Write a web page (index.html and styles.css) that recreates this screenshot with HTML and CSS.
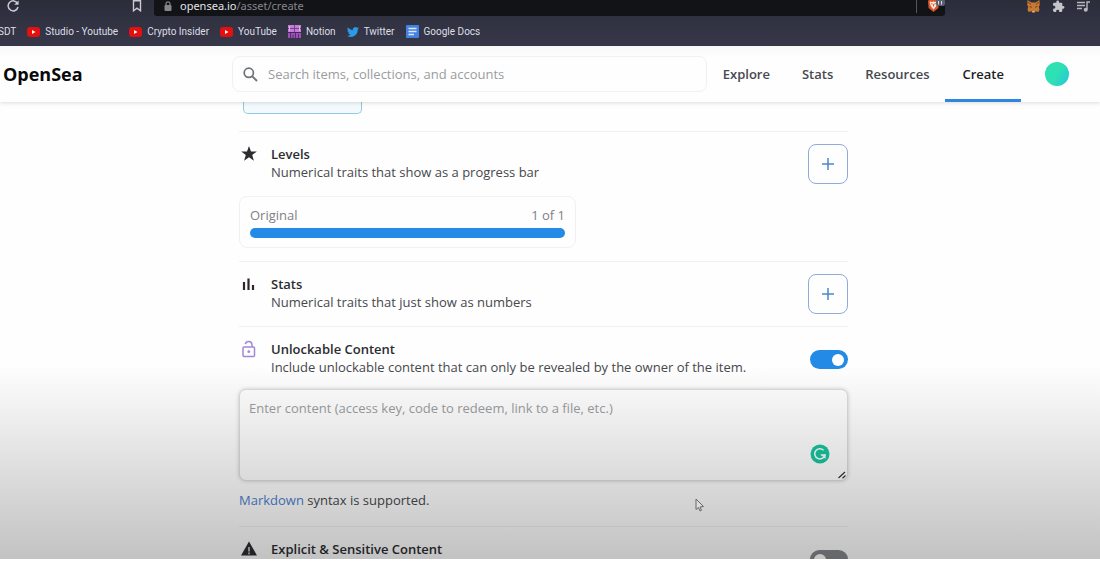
FILE: index.html
```html
<!DOCTYPE html>
<html lang="en">
<head>
<meta charset="utf-8">
<title>Create item | OpenSea</title>
<link rel="stylesheet" href="styles.css">
</head>
<body>
<div class="screen">
  <div class="browser">
    <div class="toolbar">
      <button class="tool reload" aria-label="Reload"><svg width="14" height="14" viewBox="0 0 14 14"><path d="M11.6 4.6A5 5 0 1 0 12 8" fill="none" stroke="#c9cad2" stroke-width="1.5"/><path d="M12.6 1.4v4.4H8.2z" fill="#c9cad2"/></svg></button>
      <button class="tool" aria-label="Bookmark this page"><svg width="10" height="12" viewBox="0 0 10 12"><path d="M1.5.8h7v10L5 8.2l-3.5 2.6z" fill="none" stroke="#c9cad2" stroke-width="1.4"/></svg></button>
      <div class="address">
        <svg width="8" height="10" viewBox="0 0 8 10"><path d="M2 5V2.8a2 2 0 0 1 4 0V5" fill="none" stroke="#85868c" stroke-width="1.2"/><rect x=".5" y="4" width="7" height="6" rx="1" fill="#85868c"/></svg>
        <span class="url"><b>opensea.io</b>/asset/create</span>
        <span class="shield"><svg width="18" height="14" viewBox="0 0 18 14"><path d="M2.5 0h8l1.5 2-.6 7L6.500 13 1.600 9 1 2z" fill="#dc5427"/><path d="M3 2.500l2 .6 1.500-.6 1.500.6 2-.6.3 1.500-1.300 3.500-2.500 3-2.500-3L2.700 4z" fill="#f5e9e4"/><path d="M4 4.500l1.800.7M9 4.500l-1.800.7M6.500 5v2.500" stroke="#dc5427" stroke-width=".9"/><rect x="9" y="0" width="9" height="7" rx="2" fill="#5b6070"/><path d="M11.500 2v3.500M14.500 2v3.500" stroke="#ddd"/></svg></span>
      </div>
      <button class="tool" aria-label="MetaMask"><svg width="13" height="13" viewBox="0 0 13 13"><path d="M.5 0l4 2.500h4l4-2.500.2 5-.9 2 .7 2.500-1 2.500-3-.8-1 1h-2l-1-1-3 .8-1-2.500.7-2.500L.300 5z" fill="#c9792f"/><path d="M2.500 6.500l2.500.8M10.500 6.500l-2.500.8M1 2l3 2.500M12 2L9 4.500" stroke="#7a431c"/><path d="M5 11h3l-.5 1.500h-2z" fill="#c9b7a7"/></svg></button>
      <button class="tool" aria-label="Extensions"><svg width="13" height="13" viewBox="0 0 24 24"><path d="M20.500 11H19V7a2 2 0 0 0-2-2h-4V3.500a2.500 2.500 0 0 0-5 0V5H4a2 2 0 0 0-2 2v3.800h1.500a2.700 2.700 0 0 1 0 5.400H2V20a2 2 0 0 0 2 2h3.800v-1.500a2.700 2.700 0 0 1 5.400 0V22H17a2 2 0 0 0 2-2v-4h1.500a2.500 2.500 0 0 0 0-5z" fill="#c4c5cb"/></svg></button>
      <button class="tool" aria-label="Media controls"><svg width="13" height="13" viewBox="0 0 13 13"><path d="M0 2.500h8M0 5.500h8M0 8.500h5" stroke="#b5b6be" stroke-width="1.400"/><path d="M10 9.500V2h3" fill="none" stroke="#b5b6be" stroke-width="1.400"/><circle cx="8.700" cy="9.700" r="2" fill="#b5b6be"/></svg></button>
    </div>
    <nav class="bookmarks" aria-label="Bookmarks">
      <a href="#">SDT</a>
      <a href="#"><svg width="13" height="10" viewBox="0 0 13 10"><rect width="13" height="10" rx="3" fill="#e60f0f"/><path d="M5 3l3.500 2L5 7z" fill="#fff"/></svg>Studio - Youtube</a>
      <a href="#"><svg width="13" height="10" viewBox="0 0 13 10"><rect width="13" height="10" rx="3" fill="#e60f0f"/><path d="M5 3l3.500 2L5 7z" fill="#fff"/></svg>Crypto Insider</a>
      <a href="#"><svg width="13" height="10" viewBox="0 0 13 10"><rect width="13" height="10" rx="3" fill="#e60f0f"/><path d="M5 3l3.500 2L5 7z" fill="#fff"/></svg>YouTube</a>
      <a href="#"><svg width="13" height="13" viewBox="0 0 13 13"><rect width="13" height="13" fill="#9c52b5"/><path d="M0 0h13v7H0z" fill="#c07fd0"/><path d="M0 3.500h13M6.500 0v7" stroke="#7d3c98"/><path d="M1.500 1v5M11.500 1v5" stroke="#dcb0e6"/><path d="M0 7.500h13" stroke="#4b2260"/><path d="M2.500 8v5M5 9.500v3.500M7.500 8v5M10.500 9v4" stroke="#5d2a75"/></svg>Notion</a>
      <a href="#"><svg width="12" height="12" viewBox="0 0 24 24"><path d="M24 4.600a10 10 0 0 1-2.800.8 5 5 0 0 0 2.100-2.700 10 10 0 0 1-3.100 1.200 4.900 4.900 0 0 0-8.400 4.500A14 14 0 0 1 1.700 3.200a4.900 4.900 0 0 0 1.500 6.500 5 5 0 0 1-2.200-.6 4.900 4.900 0 0 0 3.900 4.900 5 5 0 0 1-2.200.1 4.900 4.900 0 0 0 4.600 3.400A10 10 0 0 1 0 19.500a14 14 0 0 0 21.500-12.400A10 10 0 0 0 24 4.600z" fill="#2b9be6"/></svg>Twitter</a>
      <a href="#"><svg width="13" height="13" viewBox="0 0 13 13"><rect width="13" height="13" rx="1" fill="#4582df"/><path d="M2.500 3.500h8M2.500 6.500h8M2.500 9.500h5.500" stroke="#dbe8fb" stroke-width="1.500"/></svg>Google Docs</a>
    </nav>
  </div>

  <header class="site-header">
    <a class="brand" href="#">OpenSea</a>
    <label class="search">
      <svg width="15" height="15" viewBox="0 0 15 15"><circle cx="5.800" cy="5.800" r="4.600" fill="none" stroke="#6c7378" stroke-width="1.700"/><path d="M9.300 9.300l4.700 4.700" stroke="#6c7378" stroke-width="1.900"/></svg>
      <input type="search" placeholder="Search items, collections, and accounts" aria-label="Search items, collections, and accounts">
    </label>
    <nav class="site-nav">
      <a href="#">Explore</a>
      <a href="#">Stats</a>
      <a href="#">Resources</a>
      <a href="#" class="current" aria-current="page">Create</a>
    </nav>
    <button class="avatar" aria-label="Account"></button>
  </header>

  <main class="page">
    <form class="form">
      <div class="property"></div>

      <section class="section">
        <div class="row">
          <svg class="icon" width="20" height="18" viewBox="0 0 20 18"><path d="M10 1l2 5.500h5.800l-4.600 3.500 1.700 5.800-4.900-3.500-4.900 3.500L6.800 10 2.200 6.500H8z" fill="#2c2d31"/></svg>
          <div class="label"><h2>Levels</h2><p>Numerical traits that show as a progress bar</p></div>
          <button type="button" class="add" aria-label="Add level"><svg width="12" height="12" viewBox="0 0 12 12"><path d="M6 0v12M0 6h12" stroke="#4a87cf" stroke-width="1.500"/></svg></button>
        </div>
        <div class="level">
          <div class="level-text"><span>Original</span><span>1 of 1</span></div>
          <div class="bar"></div>
        </div>
      </section>

      <section class="section">
        <div class="row">
          <svg class="icon" width="20" height="18" viewBox="0 0 20 18"><path d="M5 7v8M9.500 3.500V15M14 10v5" stroke="#2f2628" stroke-width="2.200"/></svg>
          <div class="label"><h2>Stats</h2><p>Numerical traits that just show as numbers</p></div>
          <button type="button" class="add" aria-label="Add stat"><svg width="12" height="12" viewBox="0 0 12 12"><path d="M6 0v12M0 6h12" stroke="#4a87cf" stroke-width="1.500"/></svg></button>
        </div>
      </section>

      <section class="section">
        <div class="row">
          <svg class="icon" width="20" height="18" viewBox="0 0 20 18"><rect x="4" y="7" width="11.500" height="9.500" rx="1" fill="none" stroke="#a288dc" stroke-width="1.500"/><path d="M6.300 4.200a3.400 3.400 0 0 1 6.700.3V7" fill="none" stroke="#a288dc" stroke-width="1.500"/><circle cx="9.800" cy="11.700" r="1.400" fill="#a288dc"/></svg>
          <div class="label"><h2>Unlockable Content</h2><p>Include unlockable content that can only be revealed by the owner of the item.</p></div>
          <input class="switch" type="checkbox" role="switch" checked aria-label="Unlockable Content">
        </div>
        <div class="editor">
          <textarea placeholder="Enter content (access key, code to redeem, link to a file, etc.)" aria-label="Unlockable content"></textarea>
          <svg class="grammar" width="20" height="20" viewBox="0 0 20 20"><circle cx="10" cy="10" r="9.500" fill="#19c4a0"/><path d="M13.600 6.300A5.100 5.100 0 1 0 14.800 11h-4" fill="none" stroke="#f4fffc" stroke-width="1.500"/><path d="M15.600 10v5l-3.600-3.500z" fill="#f4fffc"/></svg>
          <svg class="grip" width="8" height="8" viewBox="0 0 8 8"><path d="M.5 7L7 1M4.500 7.200L7.500 4.500" stroke="#333" stroke-width="1.200"/></svg>
        </div>
        <p class="hint"><a href="#">Markdown</a> syntax is supported.</p>
      </section>

      <section class="section">
        <div class="row">
          <svg class="icon" width="20" height="18" viewBox="0 0 20 18"><path d="M10 1.500l8 14H2z" fill="#2c2d31"/><path d="M10 7v4.500M10 12.500v1.700" stroke="#ddd" stroke-width="1.500"/></svg>
          <div class="label"><h2>Explicit &amp; Sensitive Content</h2></div>
          <input class="switch" type="checkbox" role="switch" aria-label="Explicit and Sensitive Content">
        </div>
      </section>
    </form>
  </main>
  <div class="shade"></div>
  <svg class="pointer" width="10" height="14" viewBox="0 0 10 14"><path d="M1 1v10.500l2.500-2 1.500 3.500 1.500-.7L5 9l3.500-.5z" fill="#dcdcdc" stroke="#666" stroke-width="1"/></svg>
</div>
</body>
</html>
```
FILE: styles.css
```css
* { box-sizing: border-box; }
body { margin: 0; background: #fff; color: #46484d; font: 13px/18px "Open Sans", Inter, sans-serif; }
a { color: inherit; text-decoration: none; }
button { border: 0; padding: 0; background: none; }
h2, p { margin: 0; font-size: 13px; line-height: 18px; }
svg { flex: none; }

.screen { position: relative; display: flex; flex-direction: column; height: calc(100vh - 3px); overflow: hidden; background: #fefefe; }

.browser { flex: none; background: linear-gradient(#2c2d3b, #363749); color: #dedfe5; font: 10px/14px Roboto, "Noto Sans", sans-serif; }
.toolbar { display: flex; gap: 12px; height: 16px; padding: 0 10px 0 6px; }
.tool { display: flex; align-items: center; height: 12px; }
.reload { margin-right: auto; }
.address { display: flex; align-items: center; flex: 0 1 791px; gap: 8px; height: 16px; margin-right: 70px; padding: 0 0 4px 10px; border-radius: 0 0 3px 3px; background: #121317; }
.url { color: #85868d; font: 11px/12px "Noto Sans", sans-serif; }
.url b { color: #e4e4e6; font-weight: 400; }
.shield { display: flex; margin-left: auto; padding-left: 10px; border-left: 1px solid #55565c; }
.bookmarks { display: flex; align-items: center; gap: 11px; height: 30px; padding-top: 1px; margin-left: -2px; }
.bookmarks a { display: flex; align-items: center; gap: 5px; white-space: nowrap; }

.site-header { position: relative; z-index: 1; flex: none; display: flex; align-items: center; height: 56px; padding: 0 31px 0 3px; background: linear-gradient(#f8f8f8, #fefefe 12px); box-shadow: 0 1px 4px #00000024; }
.brand { flex: 0 0 229px; color: #08090b; font-size: 18px; font-weight: 700; }
.search { display: flex; align-items: center; flex: 1; gap: 10px; height: 36px; padding: 0 11px 0 10px; border: 1px solid #f1f1f3; border-radius: 8px; }
.search input { flex: 1; min-width: 0; border: 0; padding: 0; background: none; font: inherit; }
.search input::placeholder { color: #9a9c9f; }
.site-nav { display: flex; align-self: stretch; font-weight: 600; color: #464950; }
.site-nav a { display: flex; align-items: center; padding: 0 16px; border-bottom: 3px solid transparent; border-top: 3px solid transparent; }
.site-nav .current { padding: 0 17px; border-bottom-color: #2e86de; color: #1d1f24; }
.avatar { width: 24px; height: 24px; margin-left: 24px; border-radius: 50%; background: linear-gradient(120deg, #2ee0b4 50%, #28c4da); }

.page { flex: 1; min-height: 0; padding: 0 13px 0 0; overflow: hidden; }
.form { max-width: 609px; margin: 0 auto; }
.property { width: 119px; height: 12px; margin: 0 4px 17px; border: 1px solid #8fcadc; border-top: 0; border-radius: 0 0 5px 5px; background: #f3fafd; }
.section { padding: 12px 0; border-top: 1px solid #f0f0f2; }
.row { display: flex; align-items: center; gap: 12px; min-height: 40px; }
.icon { align-self: flex-start; margin-top: 1px; }
.label { flex: 1; align-self: flex-start; padding-top: 1px; }
.label h2 { font-weight: 600; color: #2b2c31; }
.add { display: grid; place-items: center; width: 40px; height: 40px; border: 1px solid #8eabdc; border-radius: 8px; }
.level { max-width: 337px; margin: 12px 0 1px; padding: 9px 10px; border: 1px solid #f1f1f3; border-radius: 8px; }
.level-text { display: flex; justify-content: space-between; color: #7e8186; margin-bottom: 4px; }
.bar { height: 10px; border-radius: 5px; background: #238be6; }
.switch { appearance: none; display: flex; width: 38px; height: 19px; margin: 0; padding: 4px 4px; border-radius: 10px; background: #86878b; }
.switch::before { content: ""; width: 12px; height: 12px; border-radius: 50%; background: #fff; }
.switch:checked { justify-content: flex-end; background: #238be6; }
.editor { position: relative; display: flex; margin-top: 10px; }
.editor textarea { flex: 1; height: 92px; padding: 9px; border: 1px solid #dcdcde; border-radius: 7px; background: #fefefe; box-shadow: 0 0 4px #0003; font: inherit; resize: none; }
.editor textarea::placeholder { color: #9b9da0; }
.grammar { position: absolute; right: 18px; bottom: 17px; }
.grip { position: absolute; right: 2px; bottom: 2px; }
.hint { margin: 10px 0 5px; }
.hint a { color: #4c7fd0; }
.shade { position: absolute; z-index: 2; inset: 365px 0 0; background: linear-gradient(#0000, #0000003c); pointer-events: none; }
.pointer { position: absolute; z-index: 3; left: 695px; top: 498px; }
```
